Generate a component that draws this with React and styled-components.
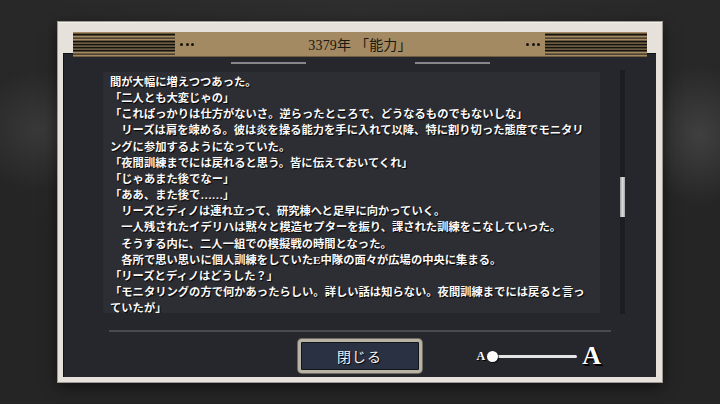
import React from "react"
import styled, { createGlobalStyle } from "styled-components"

const GlobalStyle = createGlobalStyle`
  body {
    margin: 0;
    background: #262626;
  }
  * {
    box-sizing: border-box;
  }
`

const LINES = [
  "間が大幅に増えつつあった。",
  "「二人とも大変じゃの」",
  "「これぱっかりは仕方がないさ。逆らったところで、どうなるものでもないしな」",
  "　リーズは肩を竦める。彼は炎を操る能力を手に入れて以降、特に割り切った態度でモニタリ",
  "ングに参加するようになっていた。",
  "「夜間訓練までには戻れると思う。皆に伝えておいてくれ」",
  "「じゃあまた後でなー」",
  "「ああ、また後で……」",
  "　リーズとディノは連れ立って、研究棟へと足早に向かっていく。",
  "　一人残されたイデリハは黙々と模造セプターを振り、課された訓練をこなしていった。",
  "　そうする内に、二人一組での模擬戦の時間となった。",
  "　各所で思い思いに個人訓練をしていたE中隊の面々が広場の中央に集まる。",
  "「リーズとディノはどうした？」",
  "「モニタリングの方で何かあったらしい。詳しい話は知らない。夜間訓練までには戻ると言っ",
  "ていたが」",
]

const Screen = styled.div`
  width: 720px;
  height: 404px;
  display: flex;
  align-items: center;
  justify-content: center;
  background:
    radial-gradient(ellipse 70px 60px at 40px 130px, rgba(90, 90, 90, 0.35), transparent),
    radial-gradient(ellipse 60px 70px at 700px 135px, rgba(110, 110, 110, 0.35), transparent),
    radial-gradient(ellipse 500px 300px at 360px 0px, rgba(60, 60, 60, 0.4), transparent),
    #252525;
  overflow: hidden;
`

const Frame = styled.div`
  width: 604px;
  height: 360px;
  display: flex;
  flex-direction: column;
  padding: 10px 6px 5px 5px;
  background: #e6e1da;
  border-top: 1px solid #f3f0ec;
  box-shadow: 0 0 0 1px #9d9a95, 0 4px 14px rgba(0, 0, 0, 0.6);
`

const Header = styled.div`
  position: relative;
  z-index: 1;
  height: 24px;
  margin: -1px 9px -3px 10px;
  display: grid;
  grid-template-columns: 102px 24px 1fr 24px 102px;
  align-items: center;
  background: #a38a62;
  box-shadow: 0 1px 0 #6f5d40;
`

const Stripes = styled.div`
  height: 100%;
  background: repeating-linear-gradient(
    to bottom,
    #a38a62 0 1.4px,
    #16130f 1.4px 3.2px
  );
  background-position: 0 0.6px;
`

const Dots = styled.div`
  display: flex;
  justify-content: center;
  gap: 2.5px;
  span {
    width: 3px;
    height: 3px;
    border-radius: 50%;
    background: #15120e;
  }
`

const Title = styled.div`
  text-align: center;
  font-family: "Liberation Serif", "Noto Sans CJK JP", serif;
  font-size: 14px;
  color: #1c170f;
  letter-spacing: 0.2px;
`

const Panel = styled.div`
  flex: 1;
  display: flex;
  flex-direction: column;
  padding-top: 9px;
  background: #26272c;
  box-shadow: inset 1px 1px 0 #111215;
`

const TabMarks = styled.div`
  display: flex;
  justify-content: center;
  gap: 109px;
  height: 2px;
  padding-left: 1px;
  span {
    width: 75px;
    background: #85878b;
  }
`

const Body = styled.div`
  display: flex;
  align-items: flex-start;
  margin-top: 8px;
  padding-left: 40px;
`

const TextBox = styled.div`
  width: 497px;
  height: 241px;
  padding: 2px 0 0 7px;
  overflow: hidden;
  background: #2d2e34;
  font-family: "Liberation Serif", "Noto Sans CJK JP", serif;
  font-size: 11.3px;
  font-weight: 700;
  line-height: 16.15px;
  color: #fafafa;
  text-shadow: 1px 1px 1px #000;
`

const Line = styled.div`
  white-space: nowrap;
`

const ScrollTrack = styled.div`
  position: relative;
  width: 5px;
  height: 244px;
  margin: -2px 0 0 20px;
  background: #1c1d21;
`

const ScrollThumb = styled.div`
  position: absolute;
  left: 0;
  top: 107px;
  width: 5px;
  height: 40px;
  background: linear-gradient(to right, #9a9a9a, #dcdcdc, #a8a8a8);
`

const Separator = styled.div`
  width: 502px;
  height: 2px;
  margin: 16px 0 0 46px;
  background: #464b51;
`

const Footer = styled.div`
  display: grid;
  grid-template-columns: 1fr 124px 1fr;
  align-items: center;
  height: 34px;
  margin-top: 7px;
`

const CloseButton = styled.button`
  grid-column: 2;
  height: 34px;
  padding: 0;
  border: 3px solid #b8b3a4;
  border-radius: 4px;
  background: #2a3142;
  box-shadow: inset 0 0 0 1px #11141b, 0 0 0 1px #6f6b60;
  font-family: "Noto Sans CJK JP", sans-serif;
  font-size: 14px;
  color: #f2f2f2;
  letter-spacing: 1px;
  text-shadow: 1px 1px 1px #000;
`

const SizeSlider = styled.div`
  display: flex;
  align-items: center;
  margin-left: 55px;
`

const Glyph = styled.span`
  font-family: "Liberation Serif", serif;
  font-weight: 700;
  font-size: ${(p) => (p.$big ? "26px" : "12px")};
  line-height: 1;
  color: #fff;
  text-shadow: ${(p) =>
    p.$big ? "2px 2px 0 #000, 1px 1px 0 #000" : "1px 1px 0 #000"};
  margin-left: ${(p) => (p.$big ? "5px" : "0")};
`

const Track = styled.div`
  position: relative;
  width: 90px;
  height: 11px;
  margin-left: 2px;
  &::before {
    content: "";
    position: absolute;
    left: 5px;
    right: 0;
    top: 4px;
    height: 3px;
    border-radius: 2px;
    background: #e4e4e4;
  }
`

const Knob = styled.div`
  position: absolute;
  left: 0;
  top: 0;
  width: 11px;
  height: 11px;
  border-radius: 50%;
  background: #fff;
  box-shadow: 1px 1px 1px rgba(0, 0, 0, 0.7);
`

const App = () => {
  return (
    <Screen>
      <GlobalStyle />
      <Frame>
        <Header>
          <Stripes />
          <Dots>
            <span />
            <span />
            <span />
          </Dots>
          <Title>3379年 「能力」</Title>
          <Dots>
            <span />
            <span />
            <span />
          </Dots>
          <Stripes />
        </Header>
        <Panel>
          <TabMarks>
            <span />
            <span />
          </TabMarks>
          <Body>
            <TextBox>
              {LINES.map((line, i) => (
                <Line key={i}>{line}</Line>
              ))}
            </TextBox>
            <ScrollTrack>
              <ScrollThumb />
            </ScrollTrack>
          </Body>
          <Separator />
          <Footer>
            <CloseButton type="button">閉じる</CloseButton>
            <SizeSlider>
              <Glyph>A</Glyph>
              <Track>
                <Knob />
              </Track>
              <Glyph $big>A</Glyph>
            </SizeSlider>
          </Footer>
        </Panel>
      </Frame>
    </Screen>
  )
}

export default App
